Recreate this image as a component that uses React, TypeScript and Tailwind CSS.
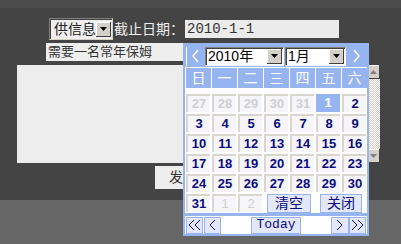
import React from 'react';

const cjk = "font-['Liberation_Sans','Noto_Sans_CJK_SC',sans-serif]";

const weekDays = ['日', '一', '二', '三', '四', '五', '六'];

type Day = { n: number; muted?: boolean; selected?: boolean };

const rows: Day[][] = [
    [{ n: 27, muted: true }, { n: 28, muted: true }, { n: 29, muted: true }, { n: 30, muted: true }, { n: 31, muted: true }, { n: 1, selected: true }, { n: 2 }],
    [3, 4, 5, 6, 7, 8, 9].map((n) => ({ n })),
    [10, 11, 12, 13, 14, 15, 16].map((n) => ({ n })),
    [17, 18, 19, 20, 21, 22, 23].map((n) => ({ n })),
    [24, 25, 26, 27, 28, 29, 30].map((n) => ({ n })),
];

const lastRow: Day[] = [{ n: 31 }, { n: 1, muted: true }, { n: 2, muted: true }];

const Chevron = ({ dir, color, count = 1, h = 12, sw = 1 }: { dir: 'l' | 'r'; color: string; count?: number; h?: number; sw?: number }) => (
    <svg width={count === 2 ? 14 : 8} height={h} viewBox={count === 2 ? `0 0 14 ${h}` : `0 0 8 ${h}`}>
        {Array.from({ length: count }).map((_, i) => (
            <polyline
                key={i}
                points={
                    dir === 'l'
                        ? `${6 + i * 6},1 ${1 + i * 6},${h / 2} ${6 + i * 6},${h - 1}`
                        : `${1 + i * 6},1 ${6 + i * 6},${h / 2} ${1 + i * 6},${h - 1}`
                }
                fill="none"
                stroke={color}
                strokeWidth={sw}
            />
        ))}
    </svg>
);

const ArrowBtn = () => (
    <div className="w-[15px] h-[15px] bg-[#d4d0c8] flex items-center justify-center shadow-[inset_-1px_-1px_0_#404040,inset_1px_1px_0_#ffffff]">
        <svg width="7" height="4" viewBox="0 0 7 4">
            <polygon points="0,0 7,0 3.5,4" fill="#000" />
        </svg>
    </div>
);

const Select = ({ label, width }: { label: string; width: string }) => (
    <div className={`${width} h-[19px] bg-white flex items-center justify-between pl-[2px] pr-[1px] border border-t-[#808080] border-l-[#808080] border-b-white border-r-white shadow-[inset_1px_1px_0_#404040]`}>
        <span className={`${cjk} text-[14px] leading-none text-black`}>{label}</span>
        <ArrowBtn />
    </div>
);

const Calendar = () => (
    <div className="absolute left-[183px] top-[43px] w-[186px] h-[193px] border-2 border-[#96b5f0] bg-white flex flex-col">
        {/* header */}
        <div className="h-[22px] bg-[#96b5f0] flex items-center px-[1px] gap-[1px]">
            <div className="w-[18px] h-[19px] flex items-center justify-center border-l border-white">
                <Chevron dir="l" color="#ffffff" h={14} sw={1.4} />
            </div>
            <Select label="2010年" width="w-[79px]" />
            <Select label="1月" width="w-[61px]" />
            <div className="w-[18px] h-[19px] ml-[1px] flex items-center justify-center">
                <Chevron dir="r" color="#ffffff" h={14} sw={1.4} />
            </div>
        </div>
        {/* week days */}
        <div className="mt-[1px] h-[21px] pl-[1px] grid grid-cols-[repeat(7,25px)] gap-x-px">
            {weekDays.map((d) => (
                <div key={d} className={`${cjk} h-[20px] bg-[#96b5f0] text-white text-[14px] flex items-center justify-center`}>
                    {d}
                </div>
            ))}
        </div>
        {/* days */}
        <div className="mt-[5px] pl-[1px] grid grid-cols-[repeat(7,24px)] auto-rows-[18px] gap-x-[2px] gap-y-[2px] font-['Liberation_Sans',sans-serif] font-bold text-[13px]">
            {rows.flat().map((d, i) => (
                <div
                    key={i}
                    className={
                        d.selected
                            ? 'bg-[#96b5f0] text-white flex items-center justify-center'
                            : `bg-[#f5f5fa] border-t-2 border-l-2 border-[#d9d5cf] flex items-center justify-center ${d.muted ? 'text-[#d0d0d0]' : 'text-[#0a0a80]'}`
                    }
                >
                    {d.n}
                </div>
            ))}
            {lastRow.map((d, i) => (
                <div
                    key={'l' + i}
                    className={`bg-[#f5f5fa] border-t-2 border-l-2 border-[#d9d5cf] flex items-center justify-center ${d.muted ? 'text-[#d0d0d0] font-normal' : 'text-[#0a0a80]'}`}
                >
                    {d.n}
                </div>
            ))}
            <div className="col-span-2 flex items-center justify-center">
                <div className={`${cjk} w-[44px] h-[19px] bg-[#e3e7f8] border border-[#96b5f0] text-[#0a0a80] text-[14px] font-normal flex items-center justify-center`}>清空</div>
            </div>
            <div className="col-span-2 flex items-center justify-center">
                <div className={`${cjk} w-[42px] h-[19px] bg-[#e3e7f8] border border-[#96b5f0] text-[#0a0a80] text-[14px] font-normal flex items-center justify-center`}>关闭</div>
            </div>
        </div>
        {/* footer */}
        <div className="mt-[1px] h-[3px] bg-[#96b5f0]" />
        <div className="flex-1 flex items-center justify-between px-[1px]">
            <div className="flex">
                <div className="w-[17px] h-[17px] bg-[#e3e7f8] border border-[#96b5f0] flex items-center justify-center">
                    <Chevron dir="l" color="#0a0a80" count={2} />
                </div>
                <div className="w-[17px] h-[17px] ml-[1px] bg-[#e3e7f8] border border-[#96b5f0] flex items-center justify-center">
                    <Chevron dir="l" color="#0a0a80" />
                </div>
            </div>
            <div className="w-[50px] h-[17px] bg-[#e3e7f8] border border-[#96b5f0] text-[#0a0a80] font-['Liberation_Mono',monospace] text-[13px] flex items-center justify-center">
                Today
            </div>
            <div className="flex">
                <div className="w-[18px] h-[17px] bg-[#e3e7f8] border border-[#96b5f0] flex items-center justify-center">
                    <Chevron dir="r" color="#0a0a80" />
                </div>
                <div className="w-[17px] h-[17px] bg-[#e3e7f8] border border-[#96b5f0] flex items-center justify-center">
                    <Chevron dir="r" color="#0a0a80" count={2} />
                </div>
            </div>
        </div>
    </div>
);

const App: React.FC = () => {
    return (
        <div className="relative w-[401px] h-[244px] overflow-hidden bg-[#666666]">
            <div className="h-[8px] bg-[#4c4c4c]" />
            <div className="h-[192px] bg-[#444444] pt-[10px]">
                {/* type + date */}
                <div className="flex items-center pl-[49px] h-[22px]">
                    <div className="w-[64px] h-[22px] bg-[#eeeeee] border border-t-[#808080] border-l-[#808080] border-b-[#d4d0c8] border-r-[#d4d0c8] shadow-[inset_1px_1px_0_#404040] flex items-center justify-between pl-[4px] pr-[1px]">
                        <span className={`${cjk} text-[14px] leading-none text-[#222]`}>供信息</span>
                        <ArrowBtn />
                    </div>
                    <span className={`${cjk} ml-[1px] text-[14px] text-[#eeeeee] whitespace-nowrap`}>截止日期：</span>
                    <div className="ml-[1px] w-[154px] h-[18px] bg-[#ebebeb] flex items-center pl-[2px] font-['Liberation_Mono',monospace] text-[14px] text-[#333]">
                        2010-1-1
                    </div>
                </div>
                {/* title */}
                <div className={`${cjk} mt-[3px] ml-[46px] w-[139px] h-[18px] bg-[#eeeeee] flex items-center pl-[2px] text-[13px] text-[#333]`}>
                    需要一名常年保姆
                </div>
                {/* textarea */}
                <div className="mt-[4px] ml-[17px] w-[363px] h-[98px] bg-[#ededed] flex justify-end">
                    <div className="w-[13px] h-full flex flex-col bg-[image:repeating-conic-gradient(#d4d0c8_0%_25%,#ffffff_0%_50%)] bg-[length:2px_2px]">
                        <div className="h-[14px] bg-[#d4d0c8] flex items-center justify-center shadow-[inset_-1px_-1px_0_#404040,inset_1px_1px_0_#ffffff]">
                            <svg width="7" height="4" viewBox="0 0 7 4"><polygon points="3.5,0 7,4 0,4" fill="#808080" /></svg>
                        </div>
                        <div className="flex-1" />
                        <div className="h-[14px] bg-[#d4d0c8] flex items-center justify-center shadow-[inset_-1px_-1px_0_#404040,inset_1px_1px_0_#ffffff]">
                            <svg width="7" height="4" viewBox="0 0 7 4"><polygon points="0,0 7,0 3.5,4" fill="#808080" /></svg>
                        </div>
                    </div>
                </div>
                {/* submit */}
                <div className={`${cjk} mt-[3px] ml-[155px] w-[56px] h-[23px] bg-[#eeeeee] flex items-center justify-center text-[14px] text-[#333]`}>
                    发布
                </div>
            </div>
            <Calendar />
        </div>
    );
};

export default App;
